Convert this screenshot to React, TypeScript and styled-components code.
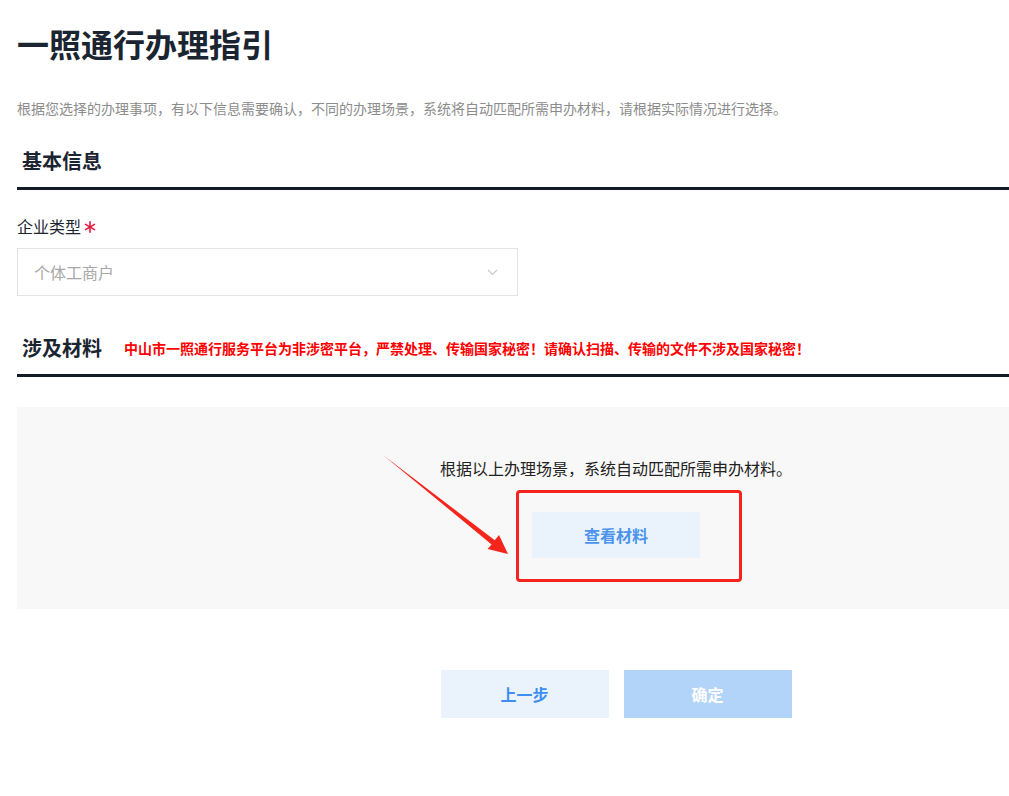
import React from "react";
import styled, { createGlobalStyle } from "styled-components";

const GlobalStyle = createGlobalStyle`
  html, body { margin: 0; padding: 0; background: #fff; }
  body { font-family: "Noto Sans CJK SC", "Noto Sans", sans-serif; color: #333; }
  * { box-sizing: border-box; }
`;

const Page = styled.div`
  position: relative;
  padding: 19px 0 78px 17px;
  width: 1009px;
`;

const Title = styled.h1`
  margin: 0;
  font-size: 32px;
  line-height: 48px;
  font-weight: 700;
  color: #1b2531;
`;

const Intro = styled.p`
  margin: 31px 0 0;
  font-size: 14px;
  line-height: 20px;
  color: #8c8c8c;
`;

const SectionHead = styled.div<{ $top: number }>`
  margin-top: ${(p) => p.$top}px;
  padding: 0 0 12px 5px;
  border-bottom: 3px solid #141d27;
  display: flex;
  align-items: center;
  gap: 22px;
`;

const SectionTitle = styled.h2`
  margin: 0;
  font-size: 20px;
  line-height: 28px;
  font-weight: 700;
  color: #1b2531;
`;

const Warning = styled.span`
  font-size: 14px;
  font-weight: 700;
  color: #f00;
  line-height: 28px;
`;

const Label = styled.div`
  margin-top: 25px;
  height: 22px;
  font-size: 16px;
  line-height: 22px;
  color: #1b2531;
  display: flex;
  align-items: center;
`;

const Star = styled.span`
  display: inline-flex;
  margin-left: 3px;
  margin-top: 1px;
`;

const Select = styled.div`
  margin-top: 11px;
  width: 501px;
  height: 48px;
  border: 1px solid #e4e4e4;
  display: flex;
  align-items: center;
  justify-content: space-between;
  padding: 0 19px 0 16px;
  font-size: 16px;
  color: #a8a8a8;
`;

const Panel = styled.div`
  margin-top: 30px;
  background: #f8f8f8;
  height: 202px;
  padding: 50px 0 0 206px;
  display: flex;
  flex-direction: column;
  align-items: center;
`;

const PanelText = styled.div`
  font-size: 16px;
  line-height: 22px;
  color: #222;
`;

const Button = styled.button<{ $variant: "light" | "primary" }>`
  width: 168px;
  height: ${(p) => (p.$variant === "primary" ? 48 : 46)}px;
  border: none;
  font-family: inherit;
  font-size: 16px;
  font-weight: 700;
  cursor: pointer;
  background: ${(p) => (p.$variant === "primary" ? "#b3d4f9" : "#eaf3fc")};
  color: ${(p) => (p.$variant === "primary" ? "#fff" : "#3d8ef0")};
`;

const ViewButton = styled(Button)`
  margin-top: 33px;
  color: #4b93ec;
`;

const Footer = styled.div`
  margin-top: 61px;
  padding-left: 206px;
  display: flex;
  justify-content: center;
  gap: 15px;
`;

const FooterButton = styled(Button)`
  height: 48px;
`;

const Highlight = styled.div`
  position: absolute;
  left: 516px;
  top: 490px;
  width: 226px;
  height: 92px;
  border: 3px solid #f5251d;
  border-radius: 4px;
  pointer-events: none;
`;

const ArrowSvg = styled.svg`
  position: absolute;
  left: 0;
  top: 0;
  pointer-events: none;
`;

const Chevron = () => (
  <svg width="11" height="7" viewBox="0 0 11 7">
    <path d="M1 1 L5.5 5.5 L10 1" fill="none" stroke="#c8c8c8" strokeWidth="1.2" />
  </svg>
);

const Asterisk = () => (
  <svg width="12" height="12" viewBox="0 0 12 12">
    <g stroke="#e8173d" strokeWidth="1.6" strokeLinecap="round">
      <line x1="6" y1="0.8" x2="6" y2="11.2" />
      <line x1="1.5" y1="3.4" x2="10.5" y2="8.6" />
      <line x1="1.5" y1="8.6" x2="10.5" y2="3.4" />
    </g>
  </svg>
);

export default function App() {
  return (
    <>
      <GlobalStyle />
      <Page>
        <Title>一照通行办理指引</Title>
        <Intro>
          根据您选择的办理事项，有以下信息需要确认，不同的办理场景，系统将自动匹配所需申办材料，请根据实际情况进行选择。
        </Intro>
        <SectionHead $top={29}>
          <SectionTitle>基本信息</SectionTitle>
        </SectionHead>
        <Label>
          企业类型
          <Star>
            <Asterisk />
          </Star>
        </Label>
        <Select>
          <span>个体工商户</span>
          <Chevron />
        </Select>
        <SectionHead $top={38}>
          <SectionTitle>涉及材料</SectionTitle>
          <Warning>
            中山市一照通行服务平台为非涉密平台，严禁处理、传输国家秘密！请确认扫描、传输的文件不涉及国家秘密！
          </Warning>
        </SectionHead>
        <Panel>
          <PanelText>根据以上办理场景，系统自动匹配所需申办材料。</PanelText>
          <ViewButton $variant="light">查看材料</ViewButton>
        </Panel>
        <Footer>
          <FooterButton $variant="light">上一步</FooterButton>
          <FooterButton $variant="primary">确定</FooterButton>
        </Footer>
        <Highlight />
        <ArrowSvg width="1009" height="796" viewBox="0 0 1009 796">
          <polygon
            points="383,455 491.6,544.4 487.6,549.0 508,554 499,535 494.8,540.2"
            fill="#f5251d"
          />
        </ArrowSvg>
      </Page>
    </>
  );
}
